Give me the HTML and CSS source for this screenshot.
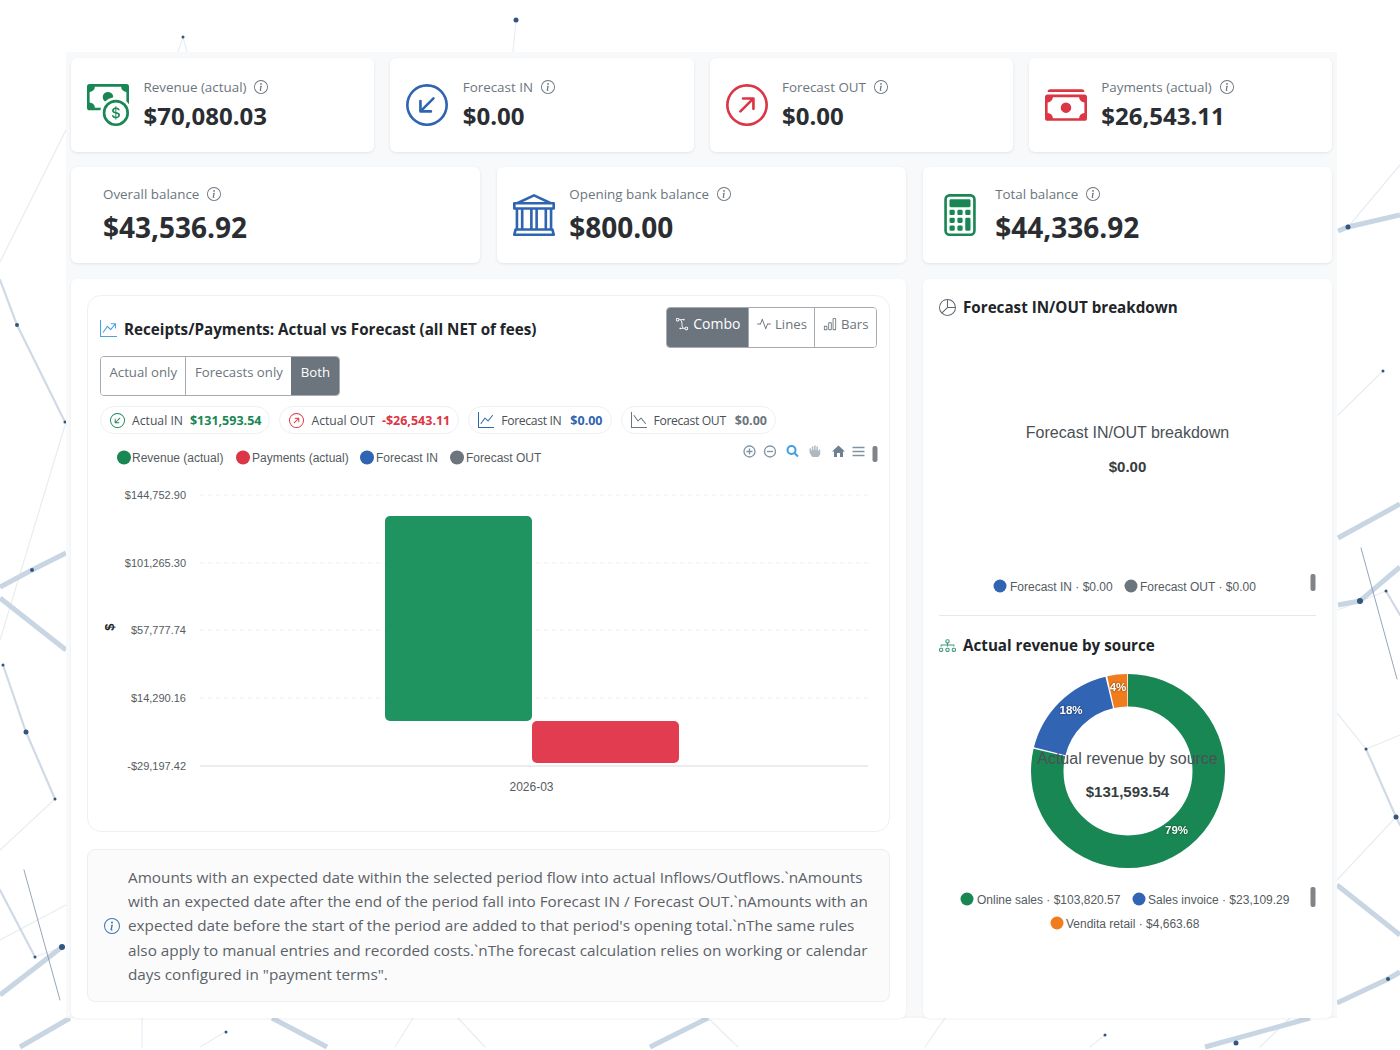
FILE: index.html
```html
<!DOCTYPE html>
<html lang="en">
<head>
<meta charset="utf-8">
<title>Dashboard</title>
<link rel="stylesheet" href="styles.css">
</head>
<body>
<svg class="sprite" width="0" height="0" aria-hidden="true">
  <defs>
    <symbol id="info" viewBox="0 0 16 16"><path d="M8 15A7 7 0 1 1 8 1a7 7 0 0 1 0 14m0 1A8 8 0 1 0 8 0a8 8 0 0 0 0 16"/><path d="m8.93 6.588-2.29.287-.082.38.45.083c.294.07.352.176.288.469l-.738 3.468c-.194.897.105 1.319.808 1.319.545 0 1.178-.252 1.465-.598l.088-.416c-.2.176-.492.246-.686.246-.275 0-.375-.193-.304-.533zM9 4.5a1 1 0 1 1-2 0 1 1 0 0 1 2 0"/></symbol>
    <symbol id="in" viewBox="0 0 16 16"><path fill-rule="evenodd" d="M1 8a7 7 0 1 0 14 0A7 7 0 0 0 1 8m15 0A8 8 0 1 1 0 8a8 8 0 0 1 16 0m-5.904-2.854a.5.5 0 1 1 .707.708L6.707 9.95h2.768a.5.5 0 1 1 0 1H5.5a.5.5 0 0 1-.5-.5V6.475a.5.5 0 1 1 1 0v2.768z"/></symbol>
    <symbol id="out" viewBox="0 0 16 16"><path fill-rule="evenodd" d="M1 8a7 7 0 1 0 14 0A7 7 0 0 0 1 8m15 0A8 8 0 1 1 0 8a8 8 0 0 1 16 0M5.854 10.803a.5.5 0 1 1-.708-.707L9.243 6H6.475a.5.5 0 1 1 0-1h3.975a.5.5 0 0 1 .5.5v3.975a.5.5 0 1 1-1 0V6.707z"/></symbol>
    <symbol id="stack" viewBox="0 0 16 16"><path d="M1 3a1 1 0 0 1 1-1h12a1 1 0 0 1 1 1zm7 8a2 2 0 1 0 0-4 2 2 0 0 0 0 4"/><path d="M0 5a1 1 0 0 1 1-1h14a1 1 0 0 1 1 1v8a1 1 0 0 1-1 1H1a1 1 0 0 1-1-1zm3 0a2 2 0 0 1-2 2v4a2 2 0 0 1 2 2h10a2 2 0 0 1 2-2V7a2 2 0 0 1-2-2z"/></symbol>
    <symbol id="coin" viewBox="0 0 16 16"><path fill-rule="evenodd" d="M11 15a4 4 0 1 0 0-8 4 4 0 0 0 0 8m5-4a5 5 0 1 1-10 0 5 5 0 0 1 10 0"/><path d="M9.438 11.944c.047.596.518 1.06 1.363 1.116v.44h.375v-.443c.875-.061 1.386-.529 1.386-1.207 0-.618-.39-.936-1.09-1.1l-.296-.07v-1.2c.376.043.614.248.671.532h.658c-.047-.575-.54-1.024-1.329-1.073V8.5h-.375v.45c-.747.073-1.255.522-1.255 1.158 0 .562.378.92 1.007 1.066l.248.061v1.272c-.384-.058-.639-.27-.696-.563h-.668zm1.36-1.354c-.369-.085-.569-.26-.569-.522 0-.294.216-.514.572-.578v1.1zm.432.746c.449.104.655.272.655.569 0 .339-.257.571-.709.614v-1.195z"/><path d="M1 0a1 1 0 0 0-1 1v8a1 1 0 0 0 1 1h4.083q.088-.517.258-1H3a2 2 0 0 0-2-2V3a2 2 0 0 0 2-2h10a2 2 0 0 0 2 2v3.528c.38.34.717.728 1 1.154V1a1 1 0 0 0-1-1z"/><path d="M9.998 5.083 10 5a2 2 0 1 0-3.132 1.65 6 6 0 0 1 3.13-1.567"/></symbol>
    <symbol id="bank" viewBox="0 0 16 16"><path d="m8 0 6.61 3h.89a.5.5 0 0 1 .5.5v2a.5.5 0 0 1-.5.5H15v7a.5.5 0 0 1 .485.38l.5 2a.498.498 0 0 1-.485.62H.5a.498.498 0 0 1-.485-.62l.5-2A.5.5 0 0 1 1 13V6H.5a.5.5 0 0 1-.5-.5v-2A.5.5 0 0 1 .5 3h.89zM3.777 3h8.447L8 1zM2 6v7h1V6zm2 0v7h2.5V6zm3.5 0v7h1V6zm2 0v7H12V6zM13 6v7h1V6zm2-1V4H1v1zm-.39 9H1.39l-.25 1h13.72z"/></symbol>
    <symbol id="calc" viewBox="0 0 16 16"><path d="M12 1a1 1 0 0 1 1 1v12a1 1 0 0 1-1 1H4a1 1 0 0 1-1-1V2a1 1 0 0 1 1-1zM4 0a2 2 0 0 0-2 2v12a2 2 0 0 0 2 2h8a2 2 0 0 0 2-2V2a2 2 0 0 0-2-2z"/><path d="M4 2.5a.5.5 0 0 1 .5-.5h7a.5.5 0 0 1 .5.5v2a.5.5 0 0 1-.5.5h-7a.5.5 0 0 1-.5-.5zm0 4a.5.5 0 0 1 .5-.5h1a.5.5 0 0 1 .5.5v1a.5.5 0 0 1-.5.5h-1a.5.5 0 0 1-.5-.5zm0 3a.5.5 0 0 1 .5-.5h1a.5.5 0 0 1 .5.5v1a.5.5 0 0 1-.5.5h-1a.5.5 0 0 1-.5-.5zm0 3a.5.5 0 0 1 .5-.5h1a.5.5 0 0 1 .5.5v1a.5.5 0 0 1-.5.5h-1a.5.5 0 0 1-.5-.5zm3-6a.5.5 0 0 1 .5-.5h1a.5.5 0 0 1 .5.5v1a.5.5 0 0 1-.5.5h-1a.5.5 0 0 1-.5-.5zm0 3a.5.5 0 0 1 .5-.5h1a.5.5 0 0 1 .5.5v1a.5.5 0 0 1-.5.5h-1a.5.5 0 0 1-.5-.5zm0 3a.5.5 0 0 1 .5-.5h1a.5.5 0 0 1 .5.5v1a.5.5 0 0 1-.5.5h-1a.5.5 0 0 1-.5-.5zm3-6a.5.5 0 0 1 .5-.5h1a.5.5 0 0 1 .5.5v1a.5.5 0 0 1-.5.5h-1a.5.5 0 0 1-.5-.5zm0 3a.5.5 0 0 1 .5-.5h1a.5.5 0 0 1 .5.5v4a.5.5 0 0 1-.5.5h-1a.5.5 0 0 1-.5-.5z"/></symbol>
    <symbol id="pie" viewBox="0 0 16 16"><path d="M7.5 1.018a7 7 0 0 0-4.79 11.566L7.5 7.793zm1 0V7.5h6.482A7 7 0 0 0 8.5 1.018M14.982 8.5H8.207l-4.79 4.79A7 7 0 0 0 14.982 8.5M0 8a8 8 0 1 1 16 0A8 8 0 0 1 0 8"/></symbol>
    <symbol id="tree" viewBox="0 0 16 16"><path fill-rule="evenodd" d="M6 3.5A1.5 1.5 0 0 1 7.5 2h1A1.5 1.5 0 0 1 10 3.5v1A1.5 1.5 0 0 1 8.5 6v1H14a.5.5 0 0 1 .5.5v1a.5.5 0 0 1-1 0V8h-5v.5a.5.5 0 0 1-1 0V8h-5v.5a.5.5 0 0 1-1 0v-1A.5.5 0 0 1 2 7h5.5V6A1.5 1.5 0 0 1 6 4.5zM8.5 5a.5.5 0 0 0 .5-.5v-1a.5.5 0 0 0-.5-.5h-1a.5.5 0 0 0-.5.5v1a.5.5 0 0 0 .5.5zM0 11.5A1.5 1.5 0 0 1 1.5 10h1A1.5 1.5 0 0 1 4 11.5v1A1.5 1.5 0 0 1 2.5 14h-1A1.5 1.5 0 0 1 0 12.5zm1.5-.5a.5.5 0 0 0-.5.5v1a.5.5 0 0 0 .5.5h1a.5.5 0 0 0 .5-.5v-1a.5.5 0 0 0-.5-.5zm4.5.5A1.5 1.5 0 0 1 7.5 10h1a1.5 1.5 0 0 1 1.5 1.5v1A1.5 1.5 0 0 1 8.5 14h-1A1.5 1.5 0 0 1 6 12.5zm1.5-.5a.5.5 0 0 0-.5.5v1a.5.5 0 0 0 .5.5h1a.5.5 0 0 0 .5-.5v-1a.5.5 0 0 0-.5-.5zm4.5.5a1.5 1.5 0 0 1 1.5-1.5h1a1.5 1.5 0 0 1 1.5 1.5v1a1.5 1.5 0 0 1-1.5 1.5h-1a1.5 1.5 0 0 1-1.5-1.5zm1.5-.5a.5.5 0 0 0-.5.5v1a.5.5 0 0 0 .5.5h1a.5.5 0 0 0 .5-.5v-1a.5.5 0 0 0-.5-.5z"/></symbol>
    <symbol id="up-arrow" viewBox="0 0 16 16"><path fill-rule="evenodd" d="M0 0h1v15h15v1H0zm10 3.5a.5.5 0 0 1 .5-.5h4a.5.5 0 0 1 .5.5v4a.5.5 0 0 1-1 0V4.9l-3.613 4.417a.5.5 0 0 1-.74.037L7.06 6.767l-3.656 5.027a.5.5 0 0 1-.808-.588l4-5.5a.5.5 0 0 1 .758-.06l2.609 2.61L13.445 4H10.5a.5.5 0 0 1-.5-.5"/></symbol>
    <symbol id="up" viewBox="0 0 16 16"><path fill-rule="evenodd" d="M0 0h1v15h15v1H0zm14.817 3.113a.5.5 0 0 1 .07.704l-4.5 5.5a.5.5 0 0 1-.74.037L7.06 6.767l-3.656 5.027a.5.5 0 0 1-.808-.588l4-5.5a.5.5 0 0 1 .758-.06l2.609 2.61 4.15-5.073a.5.5 0 0 1 .704-.07"/></symbol>
    <symbol id="down" viewBox="0 0 16 16"><path fill-rule="evenodd" d="M0 0h1v15h15v1H0zm14.817 11.887a.5.5 0 0 0 .07-.704l-4.5-5.5a.5.5 0 0 0-.74-.037L7.06 8.233 3.404 3.206a.5.5 0 0 0-.808.588l4 5.5a.5.5 0 0 0 .758.06l2.609-2.61 4.15 5.073a.5.5 0 0 0 .704.07"/></symbol>
    <symbol id="bezier" viewBox="0 0 16 16"><path fill-rule="evenodd" d="M1 2.5A1.5 1.5 0 0 1 2.5 1h1A1.5 1.5 0 0 1 5 2.5h4.134a1 1 0 1 1 0 1h-2.01q.269.27.484.605C8.246 5.097 8.5 6.459 8.5 8c0 1.993.257 3.092.713 3.7.356.476.895.721 1.787.784A1.5 1.5 0 0 1 12.5 11h1a1.5 1.5 0 0 1 1.5 1.5v1a1.5 1.5 0 0 1-1.5 1.5h-1a1.5 1.5 0 0 1-1.5-1.5H6.866a1 1 0 1 1 0-1h1.711a3 3 0 0 1-.165-.2C7.743 11.407 7.5 10.007 7.5 8c0-1.46-.246-2.597-.733-3.355-.39-.605-.952-1-1.767-1.112A1.5 1.5 0 0 1 3.5 5h-1A1.5 1.5 0 0 1 1 3.5zM2.5 2a.5.5 0 0 0-.5.5v1a.5.5 0 0 0 .5.5h1a.5.5 0 0 0 .5-.5v-1a.5.5 0 0 0-.5-.5zm10 10a.5.5 0 0 0-.5.5v1a.5.5 0 0 0 .5.5h1a.5.5 0 0 0 .5-.5v-1a.5.5 0 0 0-.5-.5z"/></symbol>
    <symbol id="activity" viewBox="0 0 16 16"><path fill-rule="evenodd" d="M6 2a.5.5 0 0 1 .47.33L10 12.036l1.53-4.208A.5.5 0 0 1 12 7.5h3.5a.5.5 0 0 1 0 1h-3.15l-1.88 5.17a.5.5 0 0 1-.94 0L6 3.964 4.47 8.171A.5.5 0 0 1 4 8.5H.5a.5.5 0 0 1 0-1h3.15l1.88-5.17A.5.5 0 0 1 6 2"/></symbol>
    <symbol id="bars" viewBox="0 0 16 16"><path d="M4 11H2v3h2zm5-4H7v7h2zm5-5v12h-2V2zm-2-1a1 1 0 0 0-1 1v12a1 1 0 0 0 1 1h2a1 1 0 0 0 1-1V2a1 1 0 0 0-1-1zM6 7a1 1 0 0 1 1-1h2a1 1 0 0 1 1 1v7a1 1 0 0 1-1 1H7a1 1 0 0 1-1-1zm-5 4a1 1 0 0 1 1-1h2a1 1 0 0 1 1 1v3a1 1 0 0 1-1 1H2a1 1 0 0 1-1-1z"/></symbol>
  </defs>
</svg>

<svg class="network" viewBox="0 0 1400 1050" aria-hidden="true">
  <g class="thin">
    <path d="M178 52 183 37 187 52M513 52 516 20M66 130 0 262M1348 227 1400 165M1338 415 1383 371M1337 713 1366 749M1337 880 1396 817M1338 610 1386 591M1366 749 1400 735M142 1018V1047M413 1018 395 1047M458 1018 485 1047M708 1018 738 1047M925 1047 945 1018M1260 1047 1290 1018M1090 1047 1105 1035M225 1032 200 1047M66 422 0 640M35 957 62 947M55 799 0 850M0 940 66 905"/>
  </g>
  <g class="mid">
    <path d="M0 280 17 325 65 422M3 665 26 732 55 799M0 890 35 957M1386 591 1400 615M1366 749 1396 817 1400 825"/>
  </g>
  <g class="thick">
    <path d="M0 587 32 570 66 553M0 598 66 650M0 995 62 947M20 1047 70 1018M272 1018 327 1047M650 1047 708 1018M1205 1047 1310 1018M1338 231 1348 227 1400 215M1338 538 1400 504M1338 605 1360 601 1400 567M1337 885 1400 935M1337 1003 1388 979 1400 972"/>
  </g>
  <g class="hair">
    <path d="M24 870 60 1000M1361 548 1397 679"/>
  </g>
  <g class="dots">
    <circle cx="183" cy="37" r="1.5"/><circle cx="516" cy="20" r="2.5"/><circle cx="17" cy="325" r="2"/><circle cx="65" cy="422" r="1.5"/><circle cx="32" cy="570" r="2"/><circle cx="3" cy="665" r="1.5"/><circle cx="26" cy="732" r="2.5"/><circle cx="55" cy="799" r="1.5"/><circle cx="62" cy="947" r="3"/><circle cx="35" cy="957" r="1.5"/><circle cx="226" cy="1032" r="1.5"/><circle cx="1348" cy="227" r="2.5"/><circle cx="1383" cy="371" r="1.5"/><circle cx="1360" cy="601" r="3"/><circle cx="1386" cy="591" r="1.5"/><circle cx="1366" cy="749" r="1.5"/><circle cx="1396" cy="817" r="2.5"/><circle cx="1388" cy="979" r="2"/><circle cx="1236" cy="1043" r="2.5"/><circle cx="1105" cy="1035" r="1.5"/>
  </g>
</svg>

<main class="shell">
  <section class="row row-four">
    <article class="stat">
      <svg class="stat-icon green"><use href="#coin"/></svg>
      <div><p class="stat-label">Revenue (actual) <svg class="info"><use href="#info"/></svg></p><p class="stat-value">$70,080.03</p></div>
    </article>
    <article class="stat">
      <svg class="stat-icon blue"><use href="#in"/></svg>
      <div><p class="stat-label">Forecast IN <svg class="info"><use href="#info"/></svg></p><p class="stat-value">$0.00</p></div>
    </article>
    <article class="stat">
      <svg class="stat-icon red"><use href="#out"/></svg>
      <div><p class="stat-label">Forecast OUT <svg class="info"><use href="#info"/></svg></p><p class="stat-value">$0.00</p></div>
    </article>
    <article class="stat">
      <svg class="stat-icon red"><use href="#stack"/></svg>
      <div><p class="stat-label">Payments (actual) <svg class="info"><use href="#info"/></svg></p><p class="stat-value">$26,543.11</p></div>
    </article>
  </section>

  <section class="row row-three">
    <article class="stat stat-big stat-plain">
      <div><p class="stat-label">Overall balance <svg class="info"><use href="#info"/></svg></p><p class="stat-value">$43,536.92</p></div>
    </article>
    <article class="stat stat-big">
      <svg class="stat-icon blue"><use href="#bank"/></svg>
      <div><p class="stat-label">Opening bank balance <svg class="info"><use href="#info"/></svg></p><p class="stat-value">$800.00</p></div>
    </article>
    <article class="stat stat-big">
      <svg class="stat-icon green"><use href="#calc"/></svg>
      <div><p class="stat-label">Total balance <svg class="info"><use href="#info"/></svg></p><p class="stat-value">$44,336.92</p></div>
    </article>
  </section>

  <section class="row row-main">
    <div class="panel panel-left">
      <div class="chart-card">
        <header class="chart-head">
          <h2 class="title"><svg class="title-icon sky"><use href="#up-arrow"/></svg>Receipts/Payments: Actual vs Forecast (all NET of fees)</h2>
          <div class="btn-group">
            <span class="btn active"><svg class="btn-icon"><use href="#bezier"/></svg>Combo</span>
            <span class="btn"><svg class="btn-icon"><use href="#activity"/></svg>Lines</span>
            <span class="btn"><svg class="btn-icon"><use href="#bars"/></svg>Bars</span>
          </div>
        </header>
        <div class="btn-group scope">
          <span class="btn">Actual only</span>
          <span class="btn">Forecasts only</span>
          <span class="btn active">Both</span>
        </div>
        <div class="chips">
          <span class="chip"><svg class="chip-icon green"><use href="#in"/></svg>Actual IN <b class="green">$131,593.54</b></span>
          <span class="chip"><svg class="chip-icon red"><use href="#out"/></svg>Actual OUT <b class="red">-$26,543.11</b></span>
          <span class="chip chip-forecast"><svg class="chip-icon blue"><use href="#up"/></svg>Forecast IN <b class="blue">$0.00</b></span>
          <span class="chip chip-forecast"><svg class="chip-icon grey"><use href="#down"/></svg>Forecast OUT <b class="grey">$0.00</b></span>
        </div>
        <svg class="bar-chart" viewBox="88 438 801 392">
          <g class="legend">
            <circle cx="124" cy="457.500" r="7" fill="#198754"/><text x="132" y="462">Revenue (actual)</text>
            <circle cx="243" cy="457.500" r="7" fill="#dc3545"/><text x="252" y="462">Payments (actual)</text>
            <circle cx="367" cy="457.500" r="7" fill="#3264b4"/><text x="376" y="462">Forecast IN</text>
            <circle cx="457" cy="457.500" r="7" fill="#6c757d"/><text x="466" y="462">Forecast OUT</text>
          </g>
          <g class="toolbar">
            <circle cx="749.500" cy="451.500" r="5.500"/><path d="M746.500 451.500h6M749.500 448.500v6"/>
            <circle cx="770" cy="451.500" r="5.500"/><path d="M767 451.500h6"/>
            <g class="tool-on"><circle cx="791.500" cy="450" r="4"/><path d="M794.500 453l3.500 3.500"/></g>
            <path class="tool-fill" d="M809.500 452.500v-4h1.500v2h.8v-4h1.500v3.500h.8v-4.500h1.500v4.500h.8v-3.500h1.500v4.500h.8v-1.500h1.500v5l-2 2.500h-6z"/>
            <path class="tool-dark" d="M838.500 445.500l6.500 6h-2v5.500h-3v-4h-3v4h-3v-5.500h-2z"/>
            <path d="M852.500 447.500h12M852.500 451.500h12M852.500 455.500h12"/>
            <rect class="grip" x="872.500" y="446" width="5" height="16" rx="2"/>
          </g>
          <g class="grid">
            <path d="M200 495H868M200 563H868M200 630H868M200 698H868"/>
          </g>
          <path class="axis" d="M200 766H868"/>
          <g class="y-labels">
            <text x="186" y="499">$144,752.90</text>
            <text x="186" y="567">$101,265.30</text>
            <text x="186" y="634">$57,777.74</text>
            <text x="186" y="702">$14,290.16</text>
            <text x="186" y="770">-$29,197.42</text>
          </g>
          <text class="y-title" transform="rotate(-90 114 627)" x="114" y="627">$</text>
          <rect class="bar-in" x="385" y="516" width="147" height="205" rx="5"/>
          <rect class="bar-out" x="532" y="721" width="147" height="42" rx="5"/>
          <text class="x-label" x="531.500" y="791">2026-03</text>
        </svg>
      </div>
      <aside class="note">
        <svg class="note-icon"><use href="#info"/></svg>
        <p>Amounts with an expected date within the selected period flow into actual Inflows/Outflows.`nAmounts with an expected date after the end of the period fall into Forecast IN / Forecast OUT.`nAmounts with an expected date before the start of the period are added to that period's opening total.`nThe same rules also apply to manual entries and recorded costs.`nThe forecast calculation relies on working or calendar days configured in "payment terms".</p>
      </aside>
    </div>

    <div class="panel panel-right">
      <h2 class="title"><svg class="title-icon muted"><use href="#pie"/></svg>Forecast IN/OUT breakdown</h2>
      <svg class="side-chart first" viewBox="923 318 409 287">
        <text class="center-title" x="1127.500" y="437.500">Forecast IN/OUT breakdown</text>
        <text class="center-value" x="1127.500" y="472">$0.00</text>
        <g class="legend">
          <circle cx="1000" cy="586" r="6.500" fill="#3264b4"/><text x="1010" y="590.500">Forecast IN · $0.00</text>
          <circle cx="1131" cy="586" r="6.500" fill="#6c757d"/><text x="1140" y="590.500">Forecast OUT · $0.00</text>
        </g>
        <rect class="grip" x="1310.500" y="574" width="5" height="17" rx="2"/>
      </svg>
      <hr class="divider">
      <h2 class="title"><svg class="title-icon teal"><use href="#tree"/></svg>Actual revenue by source</h2>
      <svg class="side-chart second" viewBox="923 656 409 300">
        <g transform="rotate(-90 1128 771)">
          <circle class="ring" cx="1128" cy="771" r="80.750" pathLength="100" stroke="#198754" stroke-dasharray="78.7 21.3" stroke-dashoffset="0"/>
          <circle class="ring" cx="1128" cy="771" r="80.750" pathLength="100" stroke="#3264b4" stroke-dasharray="17.3 82.7" stroke-dashoffset="-78.95"/>
          <circle class="ring" cx="1128" cy="771" r="80.750" pathLength="100" stroke="#f07c1e" stroke-dasharray="3.3 96.7" stroke-dashoffset="-96.55"/>
        </g>
        <g class="pct">
          <text x="1071" y="713.500">18%</text>
          <text x="1118" y="691">4%</text>
          <text x="1176.500" y="833.500">79%</text>
        </g>
        <text class="center-title" x="1127.500" y="763.500">Actual revenue by source</text>
        <text class="center-value" x="1127.500" y="797">$131,593.54</text>
        <g class="legend">
          <circle cx="967" cy="899" r="6.500" fill="#198754"/><text x="977" y="903.500">Online sales · $103,820.57</text>
          <circle cx="1139" cy="899" r="6.500" fill="#3264b4"/><text x="1148" y="903.500">Sales invoice · $23,109.29</text>
          <circle cx="1057" cy="923" r="6.500" fill="#f07c1e"/><text x="1066" y="927.500">Vendita retail · $4,663.68</text>
        </g>
        <rect class="grip" x="1310.500" y="887" width="5" height="20" rx="2"/>
      </svg>
    </div>
  </section>
</main>
</body>
</html>
```

FILE: styles.css
```css
* { box-sizing: border-box; }
html, body { margin: 0; height: 100%; }
body {
  position: relative;
  height: 1050px;
  overflow: hidden;
  background: #fff;
  font-family: "Open Sans", "Noto Sans", sans-serif;
  color: #212529;
  padding: 52px 63px 0 66px;
}
.sprite { position: absolute; }
.network { position: absolute; left: 0; top: 0; width: 1400px; height: 1050px; }
.network path { fill: none; stroke-linecap: round; }
.thin path { stroke: #e8edf3; stroke-width: 1.2; }
.mid path { stroke: #d0dae6; stroke-width: 2.2; }
.thick path { stroke: #c8d5e3; stroke-width: 5; stroke-linecap: butt; }
.hair path { stroke: #7b8ea6; stroke-width: 0.8; }
.dots circle { fill: #34557f; }

.shell {
  position: relative;
  height: 966px;
  background: #f8f9fb;
  border-bottom: 2px solid #fbf2f3;
  padding: 6px 5px 2px;
  display: flex;
  flex-direction: column;
  gap: 15px;
}
.row { display: grid; }
.row-four { grid-template-columns: repeat(4, 1fr); gap: 16px; height: 94px; }
.row-three { grid-template-columns: repeat(3, 1fr); gap: 16.500px; height: 96px; }
.row-main { grid-template-columns: 835px 409px; gap: 17px; margin-top: 1px; flex: 1; min-height: 0; }

.stat {
  display: flex;
  align-items: center;
  gap: 14.500px;
  padding: 0 16px;
  background: #fff;
  border-radius: 6px;
  box-shadow: 0 1px 3px rgba(33, 37, 41, 0.1);
}
.stat > div { padding-bottom: 2px; }
.stat-big > div { padding-bottom: 3px; }
.stat-plain { padding-left: 32px; }
.stat-icon { width: 42px; height: 42px; flex: none; fill: currentColor; }
.stat-label {
  margin: 0;
  display: flex;
  align-items: center;
  gap: 8px;
  font-size: 13.400px;
  line-height: 20px;
  color: #6c757d;
}
.stat-value {
  margin: 4px 0 0;
  font-size: 24px;
  line-height: 30px;
  font-weight: 700;
  color: #2a2e32;
}
.stat-big .stat-value { font-size: 28px; line-height: 34px; margin-top: 6px; }
.info { width: 14px; height: 14px; fill: #6c757d; }
.green { color: #198754; }
.blue { color: #2f64b0; }
.red { color: #dc3545; }
.grey { color: #6c757d; }
.sky { color: #4ba3dc; }
.muted { color: #5f6870; }
.teal { color: #3d9a78; }

.panel { background: #fff; border-radius: 6px; box-shadow: 0 1px 3px rgba(33, 37, 41, 0.06); }
.panel-left { padding: 16px; }
.chart-card {
  height: 537px;
  border: 1px solid #eef0f2;
  border-radius: 14px;
  padding: 11px 12px 0;
}
.chart-head { display: flex; align-items: center; justify-content: space-between; height: 41px; }
.title {
  margin: 0;
  display: flex;
  align-items: center;
  font-size: 15.200px;
  line-height: 20px;
  font-weight: 700;
  color: #212529;
}
.title-icon { width: 17px; height: 17px; margin-right: 7px; fill: currentColor; }
.chart-head .title { transform: translateY(1px); }
.btn-group {
  display: inline-flex;
  height: 41px;
  border: 1px solid #a5abb0;
  border-radius: 4px;
  overflow: hidden;
}
.btn {
  display: flex;
  align-items: center;
  padding: 0 7.500px 8px;
  font-size: 13.200px;
  color: #6c757d;
  background: #fff;
}
.btn + .btn { border-left: 1px solid #a5abb0; }
.btn.active { background: #6c757d; color: #fff; border-color: #6c757d; font-weight: 500; }
.chart-head .btn.active { font-size: 14px; padding: 0 8px 8px; }
.btn-icon { width: 14px; height: 14px; margin-right: 4px; fill: currentColor; }
.scope { display: flex; width: max-content; margin-top: 8px; height: 40px; }
.scope .btn { padding: 0 8.500px 8px; }
.chips { display: flex; gap: 9px; margin-top: 10px; height: 28px; }
.chip {
  display: flex;
  align-items: center;
  height: 28px;
  padding: 0 8px 0 9px;
  border: 1px solid #eef0f2;
  border-radius: 14px;
  font-size: 12.200px;
  color: #495057;
  background: #fff;
}
.chip b { margin-left: 7px; font-size: 12.500px; font-weight: 700; }
.chip-icon { width: 15px; height: 15px; margin-right: 7px; fill: currentColor; }
.chip-forecast { letter-spacing: -0.35px; }
.chip-forecast b { margin-left: 9px; letter-spacing: 0; }
.chip-forecast .chip-icon { width: 16px; height: 16px; }
.bar-chart { display: block; width: 801px; height: 392px; margin: 4px 0 0 -12px; font-family: "Liberation Sans", Arial, sans-serif; }
.legend text { font-size: 12px; fill: #555b61; }
.toolbar { fill: none; stroke: #7f93a5; stroke-width: 1.3; }
.tool-on { stroke: #3d9fdf; stroke-width: 2; }
.tool-fill { fill: #aeb9c2; stroke: none; }
.tool-dark { fill: #6e8192; stroke: none; }
.grip { fill: #808488; stroke: none; }
.grid path { stroke: #eceef0; stroke-dasharray: 4 4; fill: none; }
.axis { stroke: #e4e6e8; stroke-width: 1.500; fill: none; }
.y-labels text { font-size: 11px; fill: #555b61; text-anchor: end; }
.y-title { font-size: 13px; font-weight: 700; fill: #212529; text-anchor: middle; }
.bar-in { fill: #1f9360; }
.bar-out { fill: #e13c4f; }
.x-label { font-size: 12px; fill: #555b61; text-anchor: middle; }

.note {
  display: flex;
  align-items: center;
  gap: 8px;
  height: 153px;
  margin-top: 17px;
  padding: 0 12px 0 16px;
  background: #fbfbfc;
  border: 1px solid #eceef0;
  border-radius: 8px;
}
.note-icon { width: 16px; height: 16px; flex: none; fill: #3f74b6; }
.note p { margin: 0; font-size: 15.300px; line-height: 24.300px; color: #5b6268; }

.panel-right { padding: 18px 16px 0; }
.side-chart { display: block; margin: 1px -16px 0; font-family: "Liberation Sans", Arial, sans-serif; }
.side-chart.first { width: 409px; height: 287px; }
.side-chart.second { width: 409px; height: 300px; }
.center-title { font-size: 16px; fill: #4a5056; text-anchor: middle; }
.center-value { font-size: 15px; font-weight: 700; fill: #373d3f; text-anchor: middle; }
.ring { fill: none; stroke-width: 32.500; }
.pct text { font-size: 11.500px; font-weight: 700; fill: #fff; text-anchor: middle; filter: drop-shadow(0 0 1px rgba(0, 0, 0, 0.5)); }
.divider { margin: 10px 0 19px; border: 0; border-top: 1px solid #e6e8ea; }
```
